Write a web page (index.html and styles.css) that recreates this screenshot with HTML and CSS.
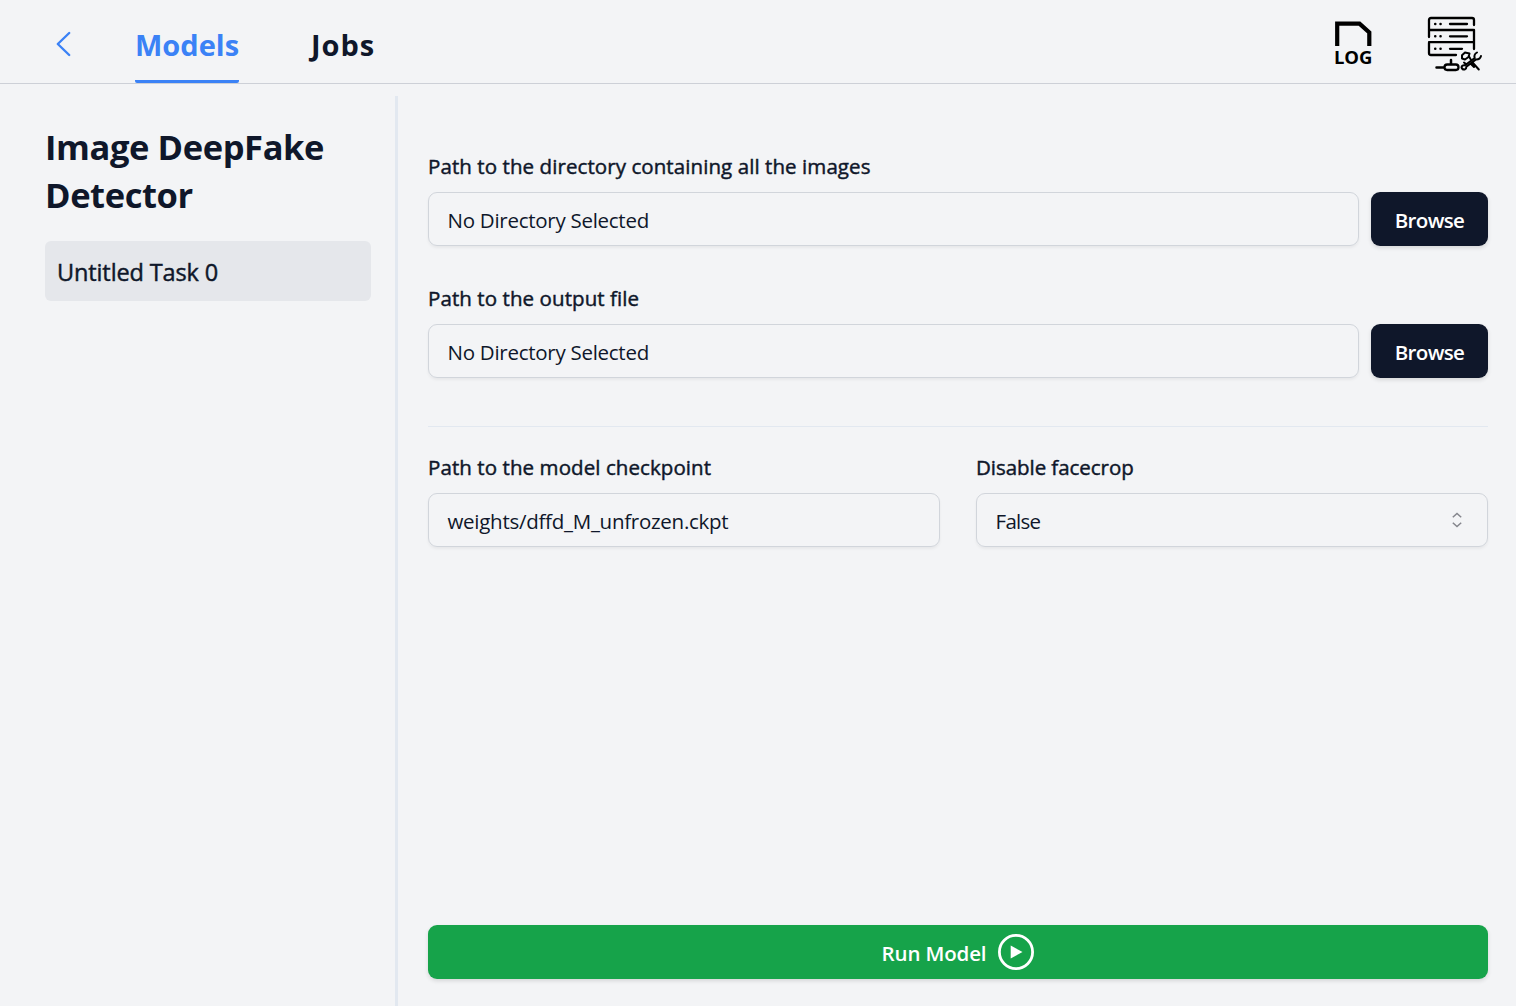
FILE: index.html
```html
<!DOCTYPE html>
<html lang="en">
<head>
<meta charset="utf-8">
<title>Image DeepFake Detector</title>
<link rel="stylesheet" href="styles.css">
</head>
<body>
<header class="topbar">
  <a class="back" aria-label="Back"><svg width="16" height="28" viewBox="0 0 16 28" fill="none" stroke="currentColor" stroke-width="2.4" stroke-linecap="round" stroke-linejoin="round"><path d="M13.200 3 1.800 14 13.200 25"/></svg></a>
  <nav class="tabs">
    <a class="tab tab-active"><span>Models</span></a>
    <a class="tab"><span class="t-jobs">Jobs</span></a>
  </nav>
  <div class="tools">
    <div class="log-icon">
      <svg width="38" height="27" viewBox="0 0 38 27"><path d="M3.200 26V3.700H25.500L35.300 12.500V26" fill="none" stroke="#000" stroke-width="4.200"/></svg>
      <span>LOG</span>
    </div>
    <svg class="server-icon" width="56" height="56" viewBox="0 0 56 56" fill="none" stroke="#000" stroke-width="2.3" stroke-linecap="round" stroke-linejoin="round">
      <path d="M2 21V4Q2 2 4 2H45Q47 2 47 4V9M2 14H46M47 14V26M2 26.200H46M47 26V33M2 27V37Q2 39 4 39H29"/>
      <path d="M23 8H40M23 20.300H40M23 32.800H35"/>
      <path stroke-width="2.500" d="M8.200 8h.1M13.500 8h.1M8.200 20.300h.1M13.500 20.300h.1M8.200 32.800h.1M13.500 32.800h.1M24 44v4M9.500 51.500h7"/>
      <rect x="17.500" y="48.500" width="14" height="5.500" rx="2.700"/>
      <path stroke-width="2" d="M50 36.500q-3.500 2-2.300 5.500L38 49.300q-3.200-.5-3.500 2 .6 2.700 3.300 2.200 1.700-1 1.600-2.700L49 43.500q4 .2 5-3.500M35 42.500v-3.300l3-2.700 4.500 1-1 3.500-3.500 2.500zM42 40.500l1.500 2.500M37 46.500l2.300 1.800M46 47l5.800 6.500M44.500 48.500l2.500 2.500"/>
    </svg>
  </div>
</header>
<main class="layout">
  <aside class="sidebar">
    <h1>Image DeepFake<br>Detector</h1>
    <div class="task medium">Untitled Task 0</div>
  </aside>
  <section class="panel">
    <div class="field">
      <label class="medium">Path to the directory containing all the images</label>
      <div class="row"><div class="input">No Directory Selected</div><button class="browse">Browse</button></div>
    </div>
    <div class="field">
      <label class="medium">Path to the output file</label>
      <div class="row"><div class="input">No Directory Selected</div><button class="browse">Browse</button></div>
    </div>
    <div class="params">
      <div class="field">
        <label class="medium">Path to the model checkpoint</label>
        <div class="input">weights/dffd_M_unfrozen.ckpt</div>
      </div>
      <div class="field">
        <label class="medium facecrop">Disable facecrop</label>
        <div class="input select"><span>False</span><svg width="12" height="18" viewBox="0 0 12 18" fill="none" stroke="#85868d" stroke-width="1.500"><path d="M1.800 6.300 6 2.500 10.200 6.300M1.800 11.700 6 15.500 10.200 11.700"/></svg></div>
      </div>
    </div>
    <button class="run"><span>Run Model</span><svg width="36" height="36" viewBox="0 0 36 36"><circle cx="18" cy="18" r="16.600" fill="none" stroke="#fff" stroke-width="2.800"/><path d="M12.700 11.500 24.500 18 12.700 24.500z" fill="#fff"/></svg></button>
  </section>
</main>
</body>
</html>
```
FILE: styles.css
```css
* { box-sizing: border-box; }
body { margin: 0; height: 100vh; display: flex; flex-direction: column; background: #f3f4f6; color: #0f172a; font-family: "Open Sans", "Noto Sans", sans-serif; font-size: 20.5px; overflow: hidden; }
.medium { -webkit-text-stroke: .45px currentColor; }
.topbar { flex: none; height: 84px; display: flex; border-bottom: 1px solid #cdd0d7; padding: 0 33px 0 56px; }
.back { color: #3b82f6; width: 79px; padding-top: 30px; }
.back svg { display: block; }
.tabs { display: flex; gap: 72px; font-size: 29px; font-weight: 700; }
.tab { height: 83px; line-height: 89px; border-bottom: 3px solid transparent; }
.tab-active { color: #3b82f6; border-bottom-color: #3b82f6; border-radius: 2px; }
.t-jobs { letter-spacing: .9px; }
.tools { margin-left: auto; display: flex; gap: 53px; }
.tools svg { display: block; }
.log-icon { width: 40px; padding-top: 20px; color: #000; font-size: 18.5px; font-weight: 700; line-height: 24px; }
.log-icon svg { margin-bottom: -2px; }
.log-icon span { display: block; letter-spacing: -.1px; }
.server-icon { margin-top: 16px; }
.layout { flex: 1; display: flex; padding-top: 12px; min-height: 0; }
.sidebar { width: 398px; border-right: 3px solid #e2e8f0; padding: 27px 24px 0 45px; }
h1 { margin: 0; font-size: 34.5px; line-height: 48px; font-weight: 700; letter-spacing: -.4px; }
.task { margin-top: 22px; height: 60px; line-height: 62px; padding-left: 12px; border-radius: 6px; background: #e5e7eb; font-size: 23.5px; letter-spacing: -.12px; }
.panel { flex: 1; display: flex; flex-direction: column; padding: 56px 28px 27px 30px; }
.field { display: flex; flex-direction: column; }
.field + .field { margin-top: 38px; }
label { height: 30px; line-height: 28px; margin-bottom: 10px; letter-spacing: .08px; }
.facecrop { letter-spacing: -.05px; }
.row { display: flex; gap: 12px; height: 54px; }
.input { flex: 1 0 54px; height: 54px; line-height: 55px; padding-left: 18.5px; border: 1px solid #d1d5db; border-radius: 9px; box-shadow: 0 2px 3px rgba(0,0,0,.05); letter-spacing: -.27px; }
.browse, .run { border: 0; color: #fff; font: 600 20.5px "Open Sans", sans-serif; box-shadow: 0 2px 4px rgba(0,0,0,.12); }
.browse { width: 117px; padding: 1px 0 0; border-radius: 9px; background: #0f172a; letter-spacing: -.65px; }
.params { display: grid; grid-template-columns: 1fr 1fr; gap: 36px; margin-top: 48px; border-top: 1px solid #e2e8f0; padding-top: 26px; }
.params .field { margin-top: 0; }
.select { display: flex; align-items: center; justify-content: space-between; padding-right: 24px; }
.select span { letter-spacing: -.7px; padding-top: 2px; }
.run { margin-top: auto; height: 54px; border-radius: 9px; background: #16a34a; display: flex; align-items: center; justify-content: center; gap: 12px; }
.run span { letter-spacing: -.15px; padding-top: 1px; }
```
